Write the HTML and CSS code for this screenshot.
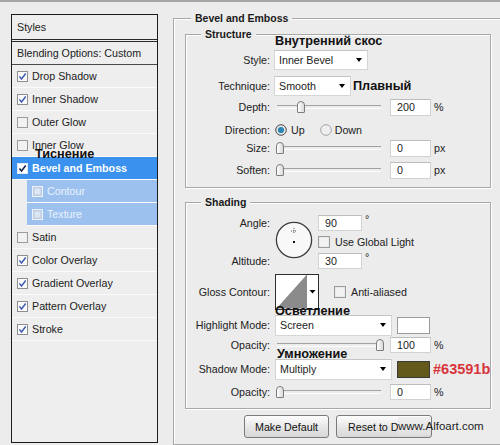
FILE: index.html
```html
<!DOCTYPE html>
<html lang="en">
<head>
<meta charset="utf-8">
<title>Layer Style - Bevel and Emboss</title>
<link rel="stylesheet" href="styles.css">
</head>
<body>
<svg class="defs" aria-hidden="true">
  <symbol id="cb-on" viewBox="0 0 11 11"><rect x="0.5" y="0.5" width="10" height="10" fill="#fbfbfb" stroke="#8d8e8f"/><path d="M2.4 5.4 L4.5 8 L8.7 2.5" fill="none" stroke="#3d5fae" stroke-width="1.5"/></symbol>
  <symbol id="cb-off" viewBox="0 0 11 11"><rect x="0.5" y="0.5" width="10" height="10" fill="#f2f2f2" stroke="#9c9c9c"/></symbol>
  <symbol id="cb-act" viewBox="0 0 11 11"><rect x="0.5" y="0.5" width="10" height="10" fill="#ffffff" stroke="#dfe9f7"/><path d="M2.4 5.4 L4.5 8 L8.7 2.5" fill="none" stroke="#13224d" stroke-width="1.6"/></symbol>
  <symbol id="cb-dis" viewBox="0 0 11 11"><rect x="0.5" y="0.5" width="10" height="10" fill="#bccde4" stroke="#eef3fa"/><rect x="2.5" y="2.5" width="6" height="6" fill="#dde6f3"/></symbol>
</svg>
<div class="app">
  <aside class="sp">
    <div class="sp-head">Styles</div>
    <div class="sp-blend">Blending Options: Custom</div>
    <ul class="sp-list">
      <li class="sp-row"><svg class="cb"><use href="#cb-on"/></svg>Drop Shadow</li>
      <li class="sp-row"><svg class="cb"><use href="#cb-on"/></svg>Inner Shadow</li>
      <li class="sp-row"><svg class="cb"><use href="#cb-off"/></svg>Outer Glow</li>
      <li class="sp-row"><svg class="cb"><use href="#cb-off"/></svg>Inner Glow</li>
      <li class="sp-row active"><svg class="cb"><use href="#cb-act"/></svg>Bevel and Emboss</li>
      <li class="sp-row sub"><svg class="cb"><use href="#cb-dis"/></svg>Contour</li>
      <li class="sp-row sub"><svg class="cb"><use href="#cb-dis"/></svg>Texture</li>
      <li class="sp-row"><svg class="cb"><use href="#cb-off"/></svg>Satin</li>
      <li class="sp-row"><svg class="cb"><use href="#cb-on"/></svg>Color Overlay</li>
      <li class="sp-row"><svg class="cb"><use href="#cb-on"/></svg>Gradient Overlay</li>
      <li class="sp-row"><svg class="cb"><use href="#cb-on"/></svg>Pattern Overlay</li>
      <li class="sp-row"><svg class="cb"><use href="#cb-on"/></svg>Stroke</li>
    </ul>
    <span class="note note-tis">Тиснение</span>
  </aside>

  <main class="opts">
    <div class="grp grp-outer">
      <div class="lg">Bevel and Emboss</div>

      <div class="grp grp-in grp-struct">
        <div class="lg">Structure</div>
        <span class="note note-style">Внутренний скос</span>

        <div class="frow r-style">
          <span class="lbl">Style:</span>
          <div class="sel sel-style"><span>Inner Bevel</span><i class="arr"></i></div>
        </div>
        <div class="frow r-tech">
          <span class="lbl">Technique:</span>
          <div class="sel sel-tech"><span>Smooth</span><i class="arr"></i></div>
          <span class="note-inline">Плавный</span>
        </div>
        <div class="frow r-depth">
          <span class="lbl">Depth:</span>
          <div class="sld"><i class="thumb" style="left:21px"></i></div>
          <span class="num">200</span><span class="unit">%</span>
        </div>
        <div class="frow r-dir">
          <span class="lbl">Direction:</span>
          <svg class="radio" width="12" height="12" viewBox="0 0 12 12"><circle cx="6" cy="6" r="5.3" fill="#e4e4e4" stroke="#4b4b4b"/><circle cx="6" cy="6" r="3.1" fill="#2c87b6"/></svg>
          <span class="rtxt">Up</span>
          <svg class="radio radio-2" width="12" height="12" viewBox="0 0 12 12"><circle cx="6" cy="6" r="5.3" fill="#efefef" stroke="#a3a3a3"/></svg>
          <span class="rtxt">Down</span>
        </div>
        <div class="frow r-size">
          <span class="lbl">Size:</span>
          <div class="sld"><i class="thumb" style="left:0px"></i></div>
          <span class="num">0</span><span class="unit">px</span>
        </div>
        <div class="frow r-soft">
          <span class="lbl">Soften:</span>
          <div class="sld"><i class="thumb" style="left:0px"></i></div>
          <span class="num">0</span><span class="unit">px</span>
        </div>
      </div>

      <div class="grp grp-in grp-shade">
        <div class="lg">Shading</div>
        <span class="note note-hl">Осветление</span>
        <span class="note note-sh">Умножение</span>

        <div class="angle">
          <div class="alabels">
            <span class="lbl">Angle:</span>
            <span class="lbl">Altitude:</span>
          </div>
          <svg class="dial" width="38" height="38" viewBox="0 0 38 38">
            <circle cx="19" cy="19" r="17.6" fill="#f8f8f8" stroke="#3d3d3d" stroke-width="1.3"/>
            <path d="M19 7 V13 M16 10 H22" stroke="#555" stroke-width="1" stroke-dasharray="1 1"/>
            <rect x="18" y="20" width="2" height="2" fill="#111"/>
          </svg>
          <div class="acol">
            <div class="arow"><span class="num num-a">90</span><span class="deg">°</span></div>
            <div class="arow"><svg class="cb cb-12"><use href="#cb-off"/></svg><span class="ctxt">Use Global Light</span></div>
            <div class="arow"><span class="num num-a">30</span><span class="deg">°</span></div>
          </div>
        </div>

        <div class="frow r-gloss">
          <span class="lbl">Gloss Contour:</span>
          <svg class="contour" width="44" height="36" viewBox="0 0 44 36">
            <rect x="0.5" y="0.5" width="43" height="35" fill="#fff" stroke="#2e2e2e"/>
            <polygon points="1.5,34.5 31,1.5 31,34.5" fill="#8b8b8b"/>
            <line x1="31.5" y1="1" x2="31.5" y2="35" stroke="#8a8a8a"/>
            <polygon points="34.5,16 40.5,16 37.5,19.5" fill="#000"/>
          </svg>
          <svg class="cb cb-12 cb-aa"><use href="#cb-off"/></svg><span class="ctxt">Anti-aliased</span>
        </div>

        <div class="frow r-hl">
          <span class="lbl">Highlight Mode:</span>
          <div class="sel sel-mode"><span>Screen</span><i class="arr"></i></div>
          <span class="swatch sw-white"></span>
        </div>
        <div class="frow r-op1">
          <span class="lbl">Opacity:</span>
          <div class="sld"><i class="thumb" style="left:100px"></i></div>
          <span class="num">100</span><span class="unit">%</span>
        </div>
        <div class="frow r-sh">
          <span class="lbl">Shadow Mode:</span>
          <div class="sel sel-mode"><span>Multiply</span><i class="arr"></i></div>
          <span class="swatch sw-shadow"></span>
          <span class="hex">#63591b</span>
        </div>
        <div class="frow r-op2">
          <span class="lbl">Opacity:</span>
          <div class="sld"><i class="thumb" style="left:0px"></i></div>
          <span class="num">0</span><span class="unit">%</span>
        </div>
      </div>

      <div class="btns">
        <button class="btn btn-make">Make Default</button>
        <button class="btn btn-reset">Reset to Default</button>
        <span class="wm">www.Alfoart.com</span>
      </div>
    </div>
  </main>
</div>
</body>
</html>
```

FILE: styles.css
```css
* { box-sizing: border-box; margin: 0; padding: 0; }

html, body { width: 500px; height: 445px; overflow: hidden; }

body {
  background: #ececec;
  border-top: 2px solid #a6a6a6;
  font-family: "Liberation Sans", Arial, sans-serif;
  font-size: 10.7px;
  color: #222;
}

.defs { position: absolute; width: 0; height: 0; overflow: hidden; }

.app { display: flex; align-items: flex-start; }

/* ---------- Styles list ---------- */
.sp {
  position: relative;
  flex: none;
  margin: 12px 0 0 11px;
  width: 147px;
  height: 429px;
  border: 1px solid #1c1c1c;
  background: #eeeeee;
}
.sp-head {
  height: 27px;
  line-height: 24px;
  padding-left: 5px;
  border-bottom: 3px double #2a2a2a;
}
.sp-blend {
  height: 23px;
  line-height: 22px;
  padding-left: 5px;
  border-bottom: 1px solid #4a4a4a;
}
.sp-list { list-style: none; }
.sp-row {
  height: 23px;
  display: flex;
  align-items: center;
  gap: 4px;
  padding-left: 5px;
  border-bottom: 1px solid #fbfbfb;
}
.sp-row.active { background: #3a92ee; color: #fff; font-weight: bold; }
.sp-row.sub { margin-left: 15px; background: #9cc1ee; color: #eaf2fc; }
.cb { width: 11px; height: 11px; flex: none; }

/* ---------- annotations ---------- */
.note, .note-inline {
  font-family: "Liberation Sans", Arial, sans-serif;
  font-weight: bold;
  font-size: 12.7px;
  line-height: 15px;
  color: #111;
  white-space: nowrap;
}
.note { position: absolute; }
.note-tis { left: 23px; top: 132px; }
.note-style { left: 89px; top: -1px; }
.note-hl { left: 89px; top: 101px; }
.note-sh { left: 91px; top: 144px; }
.note-inline { margin-left: 2px; }

/* ---------- group boxes ---------- */
.opts { flex: none; margin: 16px 0 0 15px; }
.grp {
  position: relative;
  border: 1px solid #a8a8a8;
  box-shadow: inset 1px 1px 0 #fff, 1px 1px 0 #fff;
}
.grp-outer { width: 340px; height: 427px; }
.lg {
  width: max-content;
  margin: -8px 0 0 17px;
  padding: 0 4px;
  line-height: 14px;
  font-weight: bold;
  font-size: 10.5px;
  background: #ececec;
  color: #1a1a1a;
}
.grp-in { margin-left: 11px; width: 306px; }
.grp-in .lg { margin-left: 15px; }
.grp-struct { margin-top: 9px; padding-bottom: 8px; }
.grp-shade { margin-top: 14px; padding-bottom: 8px; }

/* ---------- rows ---------- */
.frow { display: flex; align-items: center; height: 18px; }
.lbl { width: 84px; flex: none; text-align: right; margin-right: 5px; white-space: nowrap; }

.r-style { margin-top: 10px; }
.r-tech { margin-top: 8px; }
.r-depth { margin-top: 3px; }
.r-dir { margin-top: 5px; }
.r-size { margin-top: 0; }
.r-soft { margin-top: 4px; }

.sel {
  display: flex;
  align-items: center;
  justify-content: space-between;
  height: 20px;
  padding: 0 5px 0 4px;
  background: #fff;
  border: 1px solid #d6d6d6;
  border-top-color: #c4c4c4;
  flex: none;
}
.sel-style { width: 94px; margin-left: -1px; }
.sel-tech { width: 77px; margin-left: -1px; }
.sel-mode { width: 117px; height: 21px; }
.arr {
  width: 0; height: 0;
  border-left: 3.5px solid transparent;
  border-right: 3.5px solid transparent;
  border-top: 4px solid #000;
}

.sld { position: relative; width: 108px; height: 12px; margin-left: 1px; flex: none; }
.sld::before {
  content: "";
  position: absolute;
  left: 1px; right: 3px; top: 4px;
  height: 2px;
  border-top: 1px solid #a2a2a2;
  border-bottom: 1px solid #fdfdfd;
}
.thumb {
  position: absolute;
  top: 0;
  width: 8px; height: 12px;
  border: 1px solid #7c7c7c;
  border-radius: 4px 4px 1px 1px;
  background: linear-gradient(90deg, #ffffff, #d9d9d9);
}

.num {
  flex: none;
  width: 41px; height: 17px;
  margin-left: 6px;
  padding-left: 6px;
  line-height: 15px;
  background: #fff;
  border: 1px solid #d2d2d2;
  border-top-color: #bdbdbd;
}
.unit { margin-left: 3px; }

.radio { flex: none; }
.rtxt { margin-left: 4px; }
.radio-2 { margin-left: 15px; margin-right: -1px; }

/* ---------- shading ---------- */
.angle { display: flex; margin-top: 6px; height: 54px; }
.alabels { width: 84px; display: flex; flex-direction: column; justify-content: space-between; margin-right: 5px; }
.alabels .lbl { line-height: 16px; margin-right: 0; }
.dial { flex: none; margin-top: 6px; }
.acol { margin-left: 5px; display: flex; flex-direction: column; justify-content: space-between; }
.arow { display: flex; align-items: center; height: 16px; }
.num-a { width: 44px; margin-left: 0; height: 16px; }
.deg { margin-left: 3px; align-self: flex-start; margin-top: -2px; }
.cb-12 { width: 12px; height: 12px; }
.ctxt { margin-left: 5px; }

.r-gloss { margin-top: 5px; height: 36px; }
.contour { flex: none; }
.cb-aa { margin-left: 15px; }

.r-hl { margin-top: 5px; height: 20px; }
.r-op1 { margin-top: 2px; height: 16px; }
.r-sh { margin-top: 6px; height: 20px; }
.r-op2 { margin-top: 5px; height: 16px; }
.r-op1 .num, .r-op2 .num { height: 16px; }

.swatch { flex: none; width: 33px; height: 17px; margin-left: 5px; }
.sw-white { background: #fff; border: 1px solid #9a9a9a; }
.sw-shadow { background: #63591b; border: 1px solid #3a3a3a; }
.hex {
  margin-left: 3px;
  font-weight: bold;
  font-size: 14.5px;
  color: #d8343c;
}

/* ---------- buttons ---------- */
.btns { position: relative; display: flex; gap: 7px; margin: 6px 0 0 70px; }
.btn {
  height: 23px;
  font-family: "Liberation Sans", Arial, sans-serif;
  font-size: 10.7px;
  color: #111;
  border: 1px solid #7a7a7a;
  border-radius: 3px;
  background: linear-gradient(#fdfdfd, #e6e6e6 55%, #d8d8d8);
}
.btn-make { width: 85px; }
.btn-reset { width: 96px; text-align: left; padding-left: 11px; }
.wm {
  position: absolute;
  left: 154px; top: 2px;
  font-size: 11.5px;
  line-height: 18px;
  color: #1e1e1e;
  white-space: nowrap;
  background: linear-gradient(#f0f0f0, #e0e0e0) no-repeat;
  background-size: 32px 100%;
}
```
